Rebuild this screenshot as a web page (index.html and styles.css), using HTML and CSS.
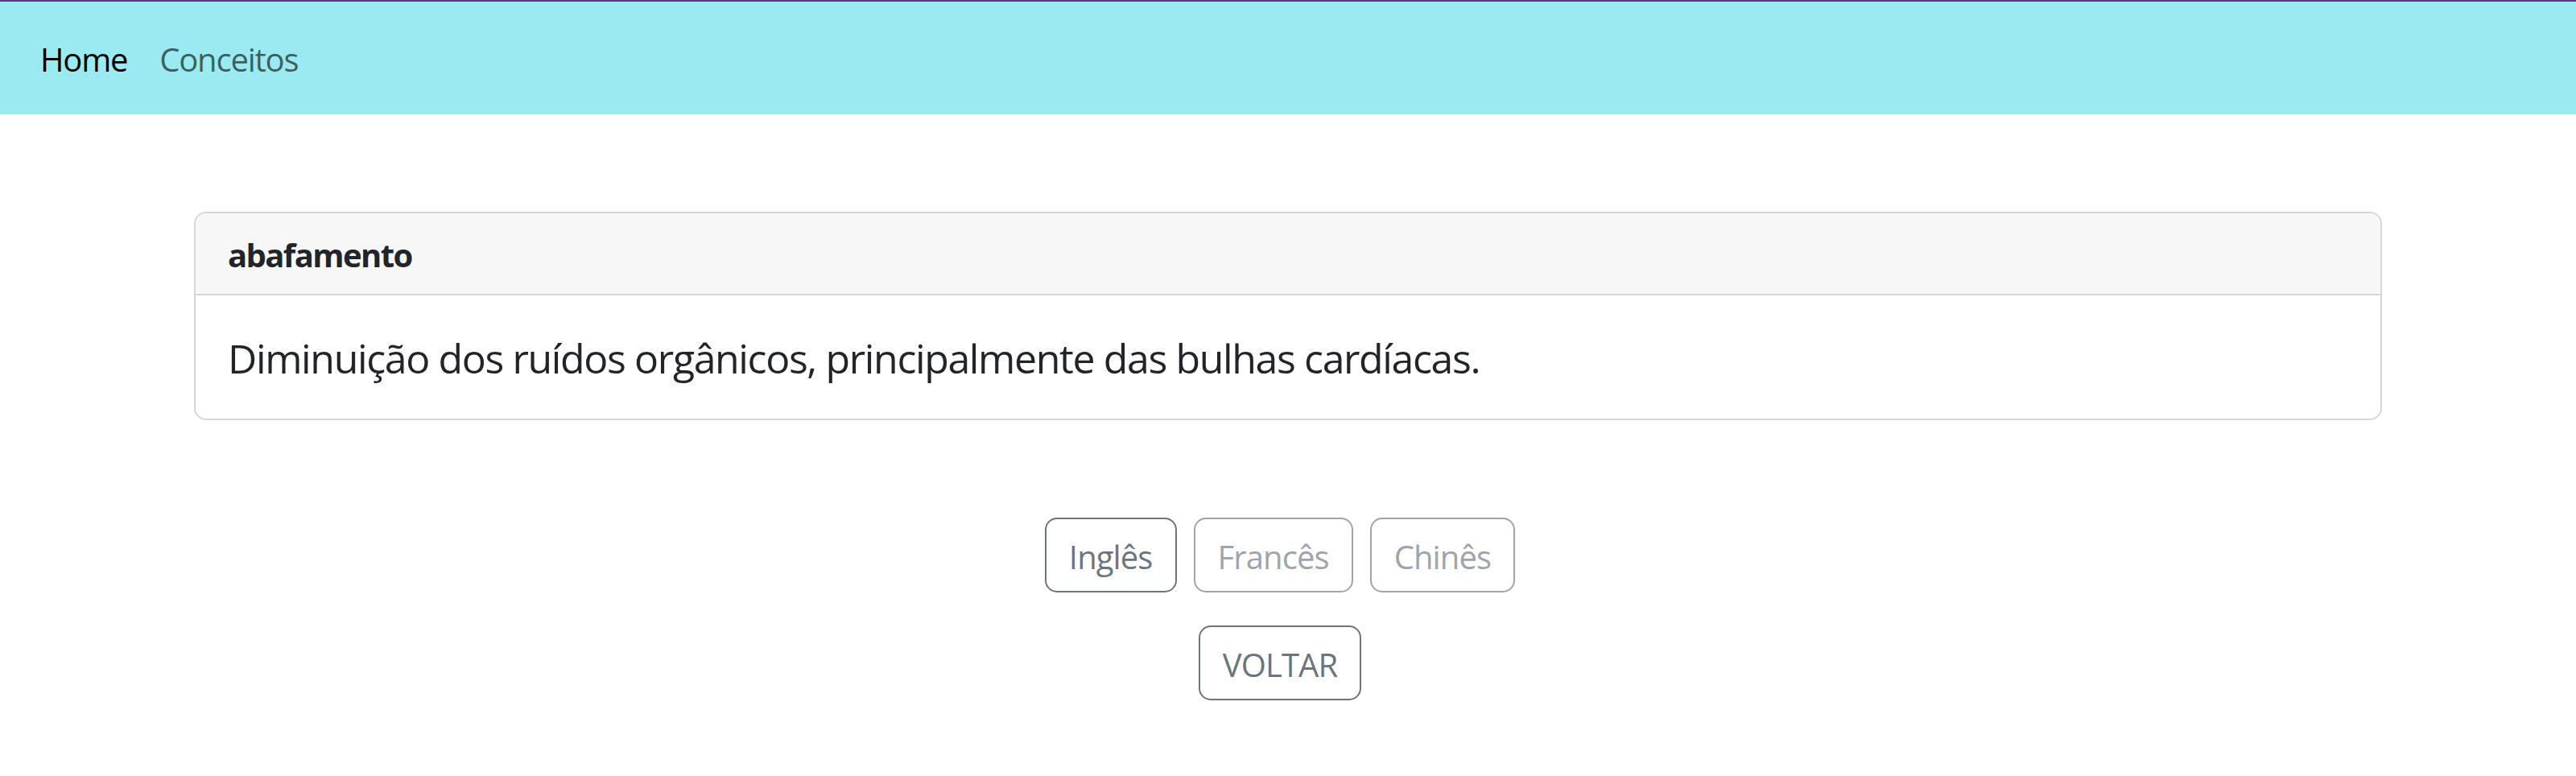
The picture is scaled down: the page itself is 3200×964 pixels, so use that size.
FILE: index.html
```html
<!DOCTYPE html>
<html lang="pt">
<head>
<meta charset="utf-8">
<title>abafamento</title>
<link rel="stylesheet" href="styles.css">
</head>
<body>
<nav class="navbar">
  <a class="nav-link active" href="#">Home</a>
  <a class="nav-link" href="#">Conceitos</a>
</nav>
<main class="container">
  <section class="card">
    <header class="card-header">abafamento</header>
    <div class="card-body">
      <p class="card-text">Diminuição dos ruídos orgânicos, principalmente das bulhas cardíacas.</p>
    </div>
  </section>
  <div class="btn-row">
    <button class="btn">Inglês</button>
    <button class="btn" disabled>Francês</button>
    <button class="btn" disabled>Chinês</button>
  </div>
  <div class="btn-row second">
    <button class="btn upper">Voltar</button>
  </div>
</main>
</body>
</html>
```
FILE: styles.css
```css
* { box-sizing: border-box; }
html, body { margin: 0; padding: 0; background: #fff; }
body {
  font-family: "Open Sans", "Noto Sans", sans-serif;
  color: #212529;
}
.navbar {
  border-top: 2px solid #573a8b;
  background: #9aebf1;
  height: 142px;
  display: flex;
  align-items: center;
  padding: 4px 30px 0;
}
.nav-link {
  font-size: 40px;
  line-height: 60px;
  padding: 0 20px;
  text-decoration: none;
  color: rgba(0, 0, 0, 0.62);
  letter-spacing: -1.2px;
}
.nav-link.active { color: #000; }
.container {
  width: 2718px;
  margin: 121px auto 0;
}
.card {
  border: 2px solid #d6d6d6;
  border-radius: 15px;
  overflow: hidden;
}
.card-header {
  background: #f7f7f7;
  border-bottom: 2px solid #d6d6d6;
  padding: 22px 40px 18px;
  font-size: 40px;
  line-height: 60px;
  font-weight: 700;
  letter-spacing: -1.6px;
}
.card-body { padding: 41px 40px 37px; }
.card-text {
  margin: 0;
  font-size: 50px;
  line-height: 75px;
  letter-spacing: -1.37px;
}
.btn-row {
  display: flex;
  justify-content: center;
  gap: 21px;
  margin-top: 121px;
  padding-right: 20px;
}
.btn-row.second { margin-top: 41px; }
.btn {
  font-family: inherit;
  font-size: 40px;
  line-height: 60px;
  letter-spacing: -0.9px;
  padding: 16.5px 28px 12.5px;
  border: 2px solid #6c757d;
  border-radius: 15px;
  color: #6c757d;
  background: transparent;
}
.btn:disabled { opacity: 0.65; }
.btn.upper { text-transform: uppercase; }
```
